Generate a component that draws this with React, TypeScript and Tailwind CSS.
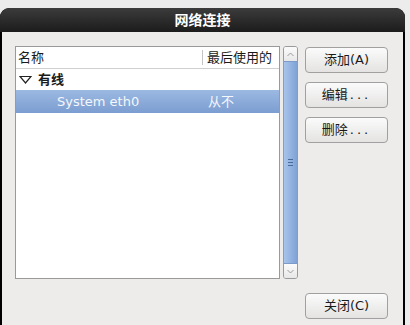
import React from "react";

const cjk = { fontFamily: '"DejaVu Sans", "Noto Sans CJK SC", sans-serif' };

function Btn({ label, dots = false, className = "" }: { label: string; dots?: boolean; className?: string }) {
  return (
    <div
      className={
        "w-[83px] h-[26px] flex items-center justify-center rounded-[4px] border border-[#a0a0a0] bg-gradient-to-b from-[#fbfbfb] to-[#e4e3e2] text-[13px] text-[#1a1a1a] " +
        className
      }
      style={cjk}
    >
      {label}
      {dots && <span className="tracking-[3px] pl-[2px]">...</span>}
    </div>
  );
}

export default function App() {
  return (
    <div className="w-[410px] h-[325px] bg-[#ececec] pt-[8px] overflow-hidden" style={cjk}>
      <div className="w-[405px] h-[317px] bg-black rounded-t-[9px] flex flex-col overflow-hidden">
        <div className="h-[24px] shrink-0 bg-gradient-to-b from-[#3c3c3c] to-[#1c1c1c] rounded-t-[9px] flex items-center justify-center text-white font-bold text-[14px]">
          网络连接
        </div>
        <div className="flex-1 mx-[2px] bg-[#edeceb] flex flex-col pl-[13px] pr-[15px] pt-[14px]">
          <div className="flex">
            {/* list */}
            <div className="w-[265px] h-[233px] border border-[#9a9a9a] bg-white flex flex-col text-[13px] text-[#1a1a1a]">
              <div className="h-[22px] flex items-center border-b border-[#cfcfcf] bg-white">
                <div className="w-[187px] pl-[2px] h-[15px] flex items-center border-r border-[#c4c4c4]">名称</div>
                <div className="pl-[4px]">最后使用的</div>
              </div>
              <div className="h-[21px] flex items-center pl-[3px]">
                <svg width="13" height="9" viewBox="0 0 13 9" className="mr-[6px]">
                  <path d="M1 1.5 L12 1.5 L6.5 8 Z" fill="none" stroke="#222" strokeWidth="1.2" />
                </svg>
                <span className="font-bold">有线</span>
              </div>
              <div className="h-[23px] flex items-center bg-gradient-to-b from-[#9cb9e2] to-[#7b9dd0] text-[#f4f7fc]">
                <div className="w-[192px] pl-[41px]">System eth0</div>
                <div>从不</div>
              </div>
            </div>
            {/* scrollbar */}
            <div className="ml-[3px] w-[15px] h-[233px] rounded-[3px] border border-[#9a9a9a] flex flex-col overflow-hidden bg-[#f4f4f4]">
              <div className="h-[14px] flex items-center justify-center bg-gradient-to-b from-[#fbfbfb] to-[#e8e8e8]">
                <svg width="7" height="5" viewBox="0 0 7 5">
                  <path d="M0.5 4 L3.5 1 L6.5 4" fill="none" stroke="#9a9a9a" strokeWidth="1" />
                </svg>
              </div>
              <div className="flex-1 border-y border-[#7d9bc8] bg-gradient-to-r from-[#a9c4ea] via-[#93b3e2] to-[#7fa2d4] flex items-center justify-center">
                <div className="flex flex-col gap-[2px]">
                  <div className="w-[5px] h-[1px] bg-[#4a6a9a]" />
                  <div className="w-[5px] h-[1px] bg-[#4a6a9a]" />
                  <div className="w-[5px] h-[1px] bg-[#4a6a9a]" />
                </div>
              </div>
              <div className="h-[14px] flex items-center justify-center bg-gradient-to-b from-[#fbfbfb] to-[#e8e8e8]">
                <svg width="7" height="5" viewBox="0 0 7 5">
                  <path d="M0.5 1 L3.5 4 L6.5 1" fill="none" stroke="#9a9a9a" strokeWidth="1" />
                </svg>
              </div>
            </div>
            {/* buttons */}
            <div className="ml-[7px] pt-[1px] flex flex-col gap-[9px]">
              <Btn label="添加(A)" />
              <Btn label="编辑" dots />
              <Btn label="删除" dots />
            </div>
          </div>
          <div className="flex justify-end mt-[14px]">
            <Btn label="关闭(C)" />
          </div>
        </div>
      </div>
    </div>
  );
}
